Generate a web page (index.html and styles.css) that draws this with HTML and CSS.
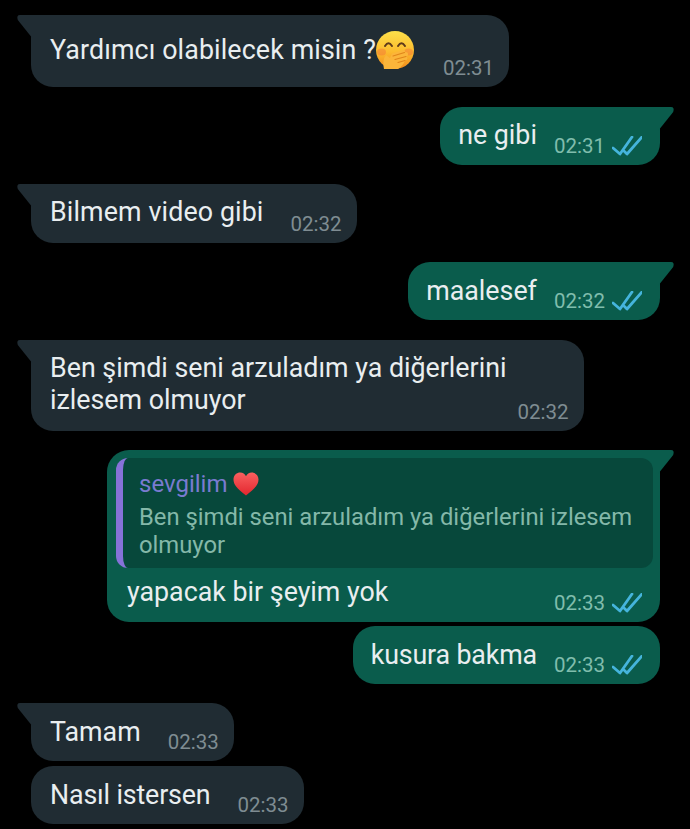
FILE: index.html
```html
<!DOCTYPE html>
<html lang="tr">
  <head>
    <meta charset="UTF-8" />
    <title>Sohbet</title>
    <link rel="stylesheet" href="styles.css">
  </head>
  <body>
    <svg class="defs" width="0" height="0" aria-hidden="true">
      <symbol id="ticks" viewBox="0 0 30 20">
        <path d="M1 12 L8 18 L20 1 M15 18 L30 1 M15 18 L12.5 15.5" fill="none" stroke="currentColor" stroke-width="2.8" stroke-linecap="round" stroke-linejoin="round" />
      </symbol>
    </svg>

    <main class="chat">
      <div class="bubble in tail">
        <div class="text tall airy">Yardımcı olabilecek misin ?<svg class="emoji" viewBox="0 0 38 38" aria-hidden="true">
            <defs>
              <linearGradient id="face" x1="0" y1="0" x2="0" y2="1">
                <stop offset="0" stop-color="#fde04a" />
                <stop offset="0.55" stop-color="#fcbb2e" />
                <stop offset="1" stop-color="#f18a1c" />
              </linearGradient>
            </defs>
            <circle cx="19" cy="19" r="19" fill="url(#face)" />
            <ellipse cx="5.5" cy="21" rx="4.5" ry="3.5" fill="#f2703a" opacity="0.45" />
            <ellipse cx="32.5" cy="21" rx="4.5" ry="3.5" fill="#f2703a" opacity="0.45" />
            <path d="M9 15 Q12.5 9.5 16 15 M22 15 Q25.5 9.5 29 15" fill="none" stroke="#5f3a1a" stroke-width="2" stroke-linecap="round" />
            <path d="M8 38 Q6 29 10 24 L14 27 L16 22.5 L27 19 Q29.5 18.5 29 21 L31.5 21.5 Q33 24 30.5 25.5 L31.5 27.5 Q31 29.5 29 29.5 Q27 35 22 38 Z" fill="#fbb53a" />
            <path d="M17 25 L28.5 21.5 M19 28.5 L30 25.5 M22 31.5 L29 29.5" fill="none" stroke="#e0851a" stroke-width="1.1" stroke-linecap="round" />
          </svg></div>
        <span class="time">02:31</span>
      </div>

      <div class="bubble out tail far">
        <div class="text">ne gibi</div>
        <span class="time">02:31</span>
        <svg class="ticks"><use href="#ticks" /></svg>
      </div>

      <div class="bubble in tail">
        <div class="text airy">Bilmem video gibi</div>
        <span class="time">02:32</span>
      </div>

      <div class="bubble out tail low">
        <div class="text">maalesef</div>
        <span class="time">02:32</span>
        <svg class="ticks"><use href="#ticks" /></svg>
      </div>

      <div class="bubble in tail far tight">
        <div class="text">Ben şimdi seni arzuladım ya diğerlerini<br />izlesem olmuyor</div>
        <span class="time">02:32</span>
      </div>

      <div class="bubble out tail reply-bubble">
        <div class="reply">
          <div class="reply-name">sevgilim <svg class="heart" viewBox="0 0 26 24" aria-hidden="true">
              <defs>
                <linearGradient id="heart" x1="0" y1="0" x2="0" y2="1">
                  <stop offset="0" stop-color="#f9605f" />
                  <stop offset="1" stop-color="#e3262e" />
                </linearGradient>
              </defs>
              <path d="M13 23.5 C4 16.5 0.5 12.5 0.5 7.5 C0.5 3 4 0.5 7.2 0.5 C9.8 0.5 12 2 13 4.2 C14 2 16.2 0.5 18.8 0.5 C22 0.5 25.5 3 25.5 7.5 C25.5 12.5 22 16.5 13 23.5Z" fill="url(#heart)" />
            </svg></div>
          <div class="reply-text">Ben şimdi seni arzuladım ya diğerlerini izlesem olmuyor</div>
        </div>
        <div class="row">
          <div class="text">yapacak bir şeyim yok</div>
          <span class="time">02:33</span>
          <svg class="ticks"><use href="#ticks" /></svg>
        </div>
      </div>

      <div class="bubble out near low">
        <div class="text snug">kusura bakma</div>
        <span class="time">02:33</span>
        <svg class="ticks"><use href="#ticks" /></svg>
      </div>

      <div class="bubble in tail low">
        <div class="text">Tamam</div>
        <span class="time">02:33</span>
      </div>

      <div class="bubble in low near-in">
        <div class="text snug">Nasıl istersen</div>
        <span class="time">02:33</span>
      </div>
    </main>
  </body>
</html>
```

FILE: styles.css
```css
:root {
  --in-bg: #202c33;
  --out-bg: #0a5c4c;
  --reply-bg: #07483b;
  --text: #e9eef0;
  --time-in: #7f8c92;
  --time-out: #80bdac;
  --tick: #45b4dc;
  --purple: #8672d8;
}

html,
body {
  margin: 0;
  padding: 0;
}

body {
  background-color: #000;
  color: var(--text);
  font-family: Roboto, sans-serif;
  overflow: hidden;
}

.defs {
  display: block;
  height: 0;
}

.chat {
  display: flex;
  flex-direction: column;
  align-items: flex-start;
  padding-top: 15px;
}

/* Bubbles */
.bubble {
  position: relative;
  display: flex;
  align-items: flex-end;
  margin-top: 19px;
  padding-top: 12px;
  border-radius: 22px;
}

.bubble:first-child {
  margin-top: 0;
}

.in {
  margin-left: 31px;
  padding-left: 19px;
  padding-right: 15px;
  background-color: var(--in-bg);
}

.out {
  align-self: flex-end;
  margin-right: 30px;
  padding-left: 18px;
  padding-right: 18px;
  background-color: var(--out-bg);
}

.far {
  margin-top: 20px;
}

.near {
  margin-top: 4px;
}

.near-in {
  margin-top: 5px;
}

/* Tail corner */
.tail::before {
  content: "";
  position: absolute;
  top: 0;
  width: 16px;
  height: 24px;
  background-color: inherit;
}

.in.tail {
  border-top-left-radius: 0;
}

.in.tail::before {
  left: -14px;
  clip-path: path("M3 0 H16 V24 L0.8 5 Q-0.8 0 3 0 Z");
}

.out.tail {
  border-top-right-radius: 0;
}

.out.tail::before {
  right: -14px;
  clip-path: path("M0 0 H13 Q16.8 0 15.2 5 L0 24 Z");
}

/* Contents */
.text {
  margin-bottom: 15px;
  font-size: 26.8px;
  line-height: 32px;
  white-space: nowrap;
}

.airy {
  letter-spacing: 0.12px;
}

.snug {
  letter-spacing: -0.15px;
}

.out .text,
.in .tall {
  margin-bottom: 14px;
}

.low .text,
.out.low .text {
  margin-top: 1px;
  margin-bottom: 13px;
}

.tall {
  display: flex;
  align-items: center;
  height: 46px;
  line-height: 46px;
}

.emoji {
  width: 38px;
  height: 38px;
  flex-shrink: 0;
}

.time {
  margin-left: 27px;
  margin-bottom: 7px;
  font-size: 20.5px;
  line-height: 24px;
  white-space: nowrap;
}

.in .time {
  color: var(--time-in);
}

.out .time {
  margin-left: 17px;
  color: var(--time-out);
}

.tight .time {
  margin-left: 11px;
}

.in .tall + .time {
  margin-left: 29px;
}

.ticks {
  width: 30px;
  height: 20px;
  margin-left: 7px;
  margin-bottom: 9px;
  color: var(--tick);
}

/* Quoted message */
.reply-bubble {
  flex-direction: column;
  align-items: stretch;
  padding: 8px 7px 0 9px;
}

.reply {
  width: 514px;
  padding: 11px 0 9px 16px;
  border-left: 7px solid var(--purple);
  border-radius: 12px;
  background-color: var(--reply-bg);
}

.reply-name {
  display: flex;
  align-items: center;
  gap: 6px;
  margin-bottom: 4px;
  font-size: 24px;
  line-height: 30px;
  color: #7a7bd0;
}

.heart {
  width: 26px;
  height: 24px;
}

.reply-text {
  font-size: 23.8px;
  line-height: 28px;
  color: #84b8a9;
}

.row {
  display: flex;
  align-items: flex-end;
  margin-top: 8px;
  padding: 0 11px 0 11px;
}

.out .row .time {
  margin-left: auto;
}
```
